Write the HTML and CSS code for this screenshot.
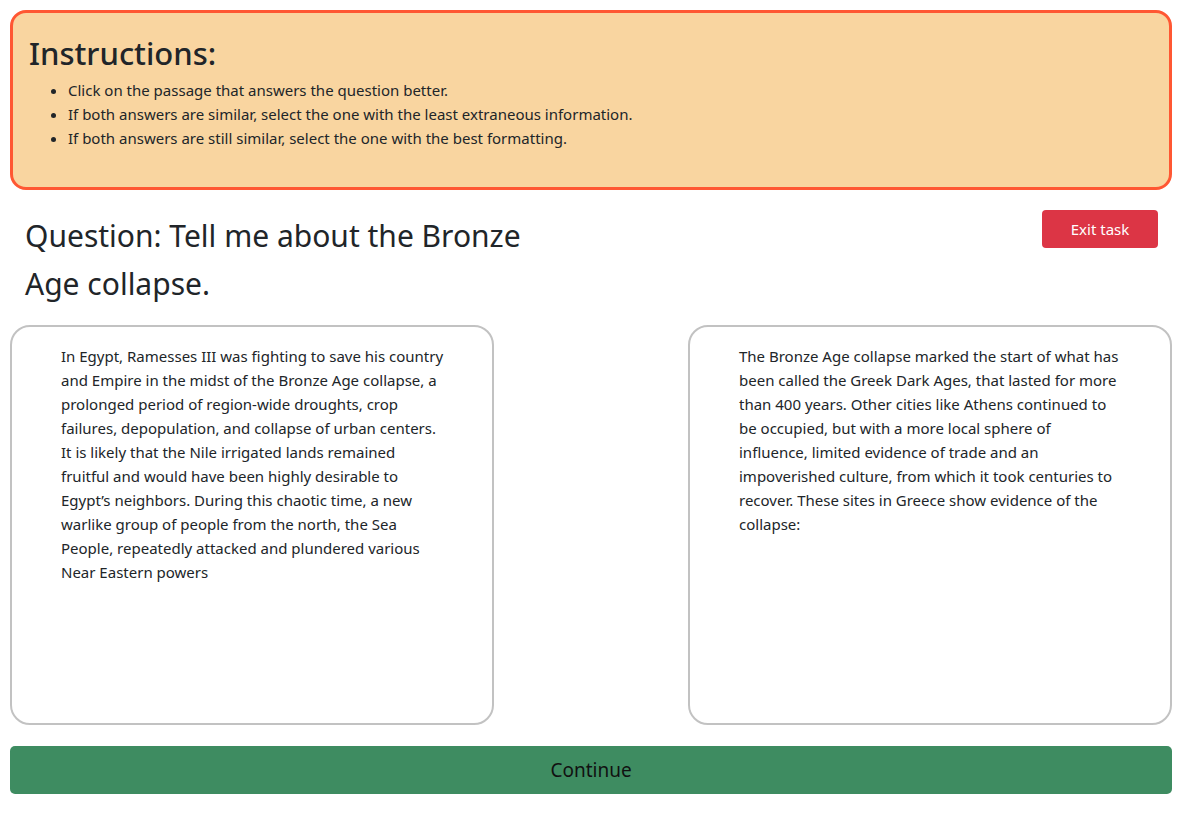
FILE: index.html
```html
<!DOCTYPE html>
<html lang="en">
<head>
<meta charset="utf-8">
<title>Compare passages</title>
<link rel="stylesheet" href="styles.css">
</head>
<body>
<div class="page">
  <section class="instructions">
    <h2 class="instructions-title">Instructions:</h2>
    <ul class="instructions-list">
      <li>Click on the passage that answers the question better.</li>
      <li>If both answers are similar, select the one with the least extraneous information.</li>
      <li>If both answers are still similar, select the one with the best formatting.</li>
    </ul>
  </section>

  <div class="question-row">
    <h2 class="question">Question: Tell me about the Bronze Age collapse.</h2>
    <button class="exit-btn" type="button">Exit task</button>
  </div>

  <div class="passages">
    <div class="passage">
      <p class="passage-text">In Egypt, Ramesses III was fighting to save his country and Empire in the midst of the Bronze Age collapse, a prolonged period of region-wide droughts, crop failures, depopulation, and collapse of urban centers. It is likely that the Nile irrigated lands remained fruitful and would have been highly desirable to Egypt’s neighbors. During this chaotic time, a new warlike group of people from the north, the Sea People, repeatedly attacked and plundered various Near Eastern powers</p>
    </div>
    <div class="passage">
      <p class="passage-text">The Bronze Age collapse marked the start of what has been called the Greek Dark Ages, that lasted for more than 400 years. Other cities like Athens continued to be occupied, but with a more local sphere of influence, limited evidence of trade and an impoverished culture, from which it took centuries to recover. These sites in Greece show evidence of the collapse:</p>
    </div>
  </div>

  <button class="continue-btn" type="button">Continue</button>
</div>
</body>
</html>
```

FILE: styles.css
```css
* { box-sizing: border-box; }

html, body {
  margin: 0;
  padding: 0;
  background: #ffffff;
}

body {
  font-family: "Noto Sans", "Open Sans", sans-serif;
  font-size: 15px;
  line-height: 24px;
  color: #212529;
}

.page {
  padding: 10px 10px 0 10px;
}

.instructions {
  background: #f9d5a0;
  border: 3px solid #ff5733;
  border-radius: 16px;
  padding: 21px 16px 19px 16px;
  height: 180px;
}

.instructions-title {
  margin: 0 0 6px 0;
  font-size: 31px;
  line-height: 38px;
  font-weight: 500;
}

.instructions-list {
  margin: 0;
  padding-left: 39px;
}

.question-row {
  display: flex;
  justify-content: space-between;
  align-items: flex-start;
  padding: 22px 14px 0 15px;
}

.question {
  margin: 0;
  width: 540px;
  font-size: 30px;
  line-height: 48px;
  font-weight: 400;
}

.exit-btn {
  margin-top: -2px;
  width: 116px;
  height: 38px;
  border: none;
  border-radius: 4px;
  background: #dc3545;
  color: #ffffff;
  font-family: inherit;
  font-size: 15px;
}

.passages {
  display: flex;
  justify-content: space-between;
  margin-top: 17px;
}

.passage {
  width: 484px;
  height: 400px;
  border: 2px solid #c2c2c2;
  border-radius: 20px;
  background: #ffffff;
  padding: 17px 48px 0 49px;
}

.passage-text {
  margin: 0;
}

.continue-btn {
  display: block;
  width: 100%;
  height: 48px;
  margin-top: 21px;
  border: none;
  border-radius: 5px;
  background: #3e8c61;
  color: #111111;
  font-family: inherit;
  font-size: 19px;
}
```
